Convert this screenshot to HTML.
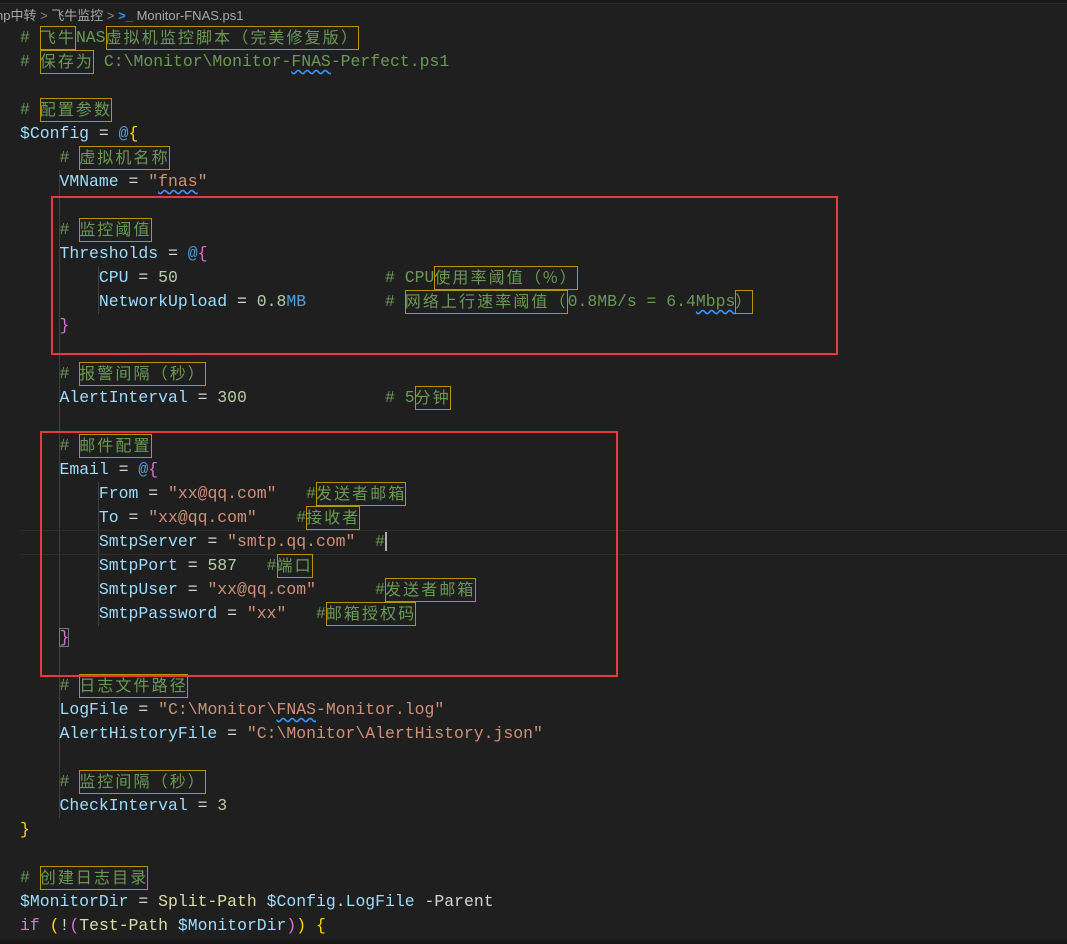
<!DOCTYPE html>
<html><head><meta charset="utf-8"><style>
body{margin:0;width:1067px;height:944px;background:#1f1f1f;overflow:hidden;position:relative;font-family:"Liberation Mono","Noto Sans CJK SC",monospace;}
.top{position:absolute;left:0;top:0;width:1067px;height:3px;background:#181818;border-bottom:1px solid #2b2b2b}
.bc{position:absolute;left:-4px;top:5px;font:13px "Liberation Sans","Noto Sans CJK SC",sans-serif;color:#a9a9a9;white-space:pre}
.l{position:absolute;left:20px;height:24px;line-height:24px;font-size:16.45px;white-space:pre;color:#d4d4d4}
.c{color:#6a9955}.v{color:#9cdcfe}.s{color:#ce9178}.n{color:#b5cea8}.k{color:#569cd6}.y{color:#ffd700}.p{color:#da70d6}.f{color:#dcdcaa}.kw{color:#c586c0}
.z{display:inline-block;vertical-align:top;height:24px;line-height:20px;box-sizing:border-box;outline:1px solid #b89500;outline-offset:-1px;letter-spacing:2.1px;font-family:"Noto Sans CJK SC",sans-serif;font-size:16px}
.w{text-decoration:underline wavy #3794ff;text-underline-offset:3px}
.box{position:absolute;border:2px solid #e8393b}
.g{position:absolute;width:1px;background:#404040}
</style></head><body>
<div class="top"></div>
<div class="bc">np中转 <span style="color:#888">&gt;</span> 飞牛监控 <span style="color:#888">&gt;</span> <span style="color:#3c8ee8;font-weight:bold">&gt;_</span> Monitor-FNAS.ps1</div>
<div class="g" style="left:59px;top:170px;height:648px"></div>
<div class="g" style="left:98px;top:266px;height:48px"></div>
<div class="g" style="left:98px;top:482px;height:144px"></div>
<div style="position:absolute;left:20px;top:530px;width:1047px;height:23px;border-top:1px solid #2e2e2e;border-bottom:1px solid #2e2e2e"></div>
<div class="l c" style="top:26px"># <span class="z">飞牛</span>NAS<span class="z">虚拟机监控脚本（完美修复版）</span></div>
<div class="l c" style="top:50px"># <span class="z">保存为</span> C:\Monitor\Monitor-<span class="w">FNAS</span>-Perfect.ps1</div>
<div class="l c" style="top:98px"># <span class="z">配置参数</span></div>
<div class="l" style="top:122px"><span class="v">$Config</span> = <span class="k">@</span><span class="y">{</span></div>
<div class="l c" style="top:146px">    # <span class="z">虚拟机名称</span></div>
<div class="l" style="top:170px">    <span class="v">VMName</span> = <span class="s">"<span class="w">fnas</span>"</span></div>
<div class="l c" style="top:218px">    # <span class="z">监控阈值</span></div>
<div class="l" style="top:242px">    <span class="v">Thresholds</span> = <span class="k">@</span><span class="p">{</span></div>
<div class="l" style="top:266px">        <span class="v">CPU</span> = <span class="n">50</span>                     <span class="c"># CPU<span class="z">使用率阈值（%）</span></span></div>
<div class="l" style="top:290px">        <span class="v">NetworkUpload</span> = <span class="n">0.8</span><span class="k">MB</span>        <span class="c"># <span class="z">网络上行速率阈值（</span>0.8MB/s = 6.4<span class="w">Mbps</span><span class="z">）</span></span></div>
<div class="l" style="top:314px">    <span class="p">}</span></div>
<div class="l c" style="top:362px">    # <span class="z">报警间隔（秒）</span></div>
<div class="l" style="top:386px">    <span class="v">AlertInterval</span> = <span class="n">300</span>              <span class="c"># 5<span class="z">分钟</span></span></div>
<div class="l c" style="top:434px">    # <span class="z">邮件配置</span></div>
<div class="l" style="top:458px">    <span class="v">Email</span> = <span class="k">@</span><span class="p">{</span></div>
<div class="l" style="top:482px">        <span class="v">From</span> = <span class="s">"xx@qq.com"</span>   <span class="c">#<span class="z">发送者邮箱</span></span></div>
<div class="l" style="top:506px">        <span class="v">To</span> = <span class="s">"xx@qq.com"</span>    <span class="c">#<span class="z">接收者</span></span></div>
<div class="l" style="top:530px">        <span class="v">SmtpServer</span> = <span class="s">"smtp.qq.com"</span>  <span class="c">#</span><span style="border-left:2px solid #aeafad"></span></div>
<div class="l" style="top:554px">        <span class="v">SmtpPort</span> = <span class="n">587</span>   <span class="c">#<span class="z">端口</span></span></div>
<div class="l" style="top:578px">        <span class="v">SmtpUser</span> = <span class="s">"xx@qq.com"</span>      <span class="c">#<span class="z">发送者邮箱</span></span></div>
<div class="l" style="top:602px">        <span class="v">SmtpPassword</span> = <span class="s">"xx"</span>   <span class="c">#<span class="z">邮箱授权码</span></span></div>
<div class="l" style="top:626px">    <span class="p" style="outline:1px solid #777;outline-offset:-1px">}</span></div>
<div class="l c" style="top:674px">    # <span class="z">日志文件路径</span></div>
<div class="l" style="top:698px">    <span class="v">LogFile</span> = <span class="s">"C:\Monitor\<span class="w">FNAS</span>-Monitor.log"</span></div>
<div class="l" style="top:722px">    <span class="v">AlertHistoryFile</span> = <span class="s">"C:\Monitor\AlertHistory.json"</span></div>
<div class="l c" style="top:770px">    # <span class="z">监控间隔（秒）</span></div>
<div class="l" style="top:794px">    <span class="v">CheckInterval</span> = <span class="n">3</span></div>
<div class="l" style="top:818px"><span class="y">}</span></div>
<div class="l c" style="top:866px"># <span class="z">创建日志目录</span></div>
<div class="l" style="top:890px"><span class="v">$MonitorDir</span> = <span class="f">Split-Path</span> <span class="v">$Config</span>.<span class="v">LogFile</span> -Parent</div>
<div class="l" style="top:914px"><span class="kw">if</span> <span class="y">(</span>!<span class="p">(</span><span class="f">Test-Path</span> <span class="v">$MonitorDir</span><span class="p">)</span><span class="y">)</span> <span class="y">{</span></div>
<div class="box" style="left:51px;top:196px;width:783px;height:155px"></div>
<div class="box" style="left:40px;top:431px;width:574px;height:242px"></div>
<div style="position:absolute;left:0;top:940px;width:1067px;height:4px;background:#181818"></div>
</body></html>
